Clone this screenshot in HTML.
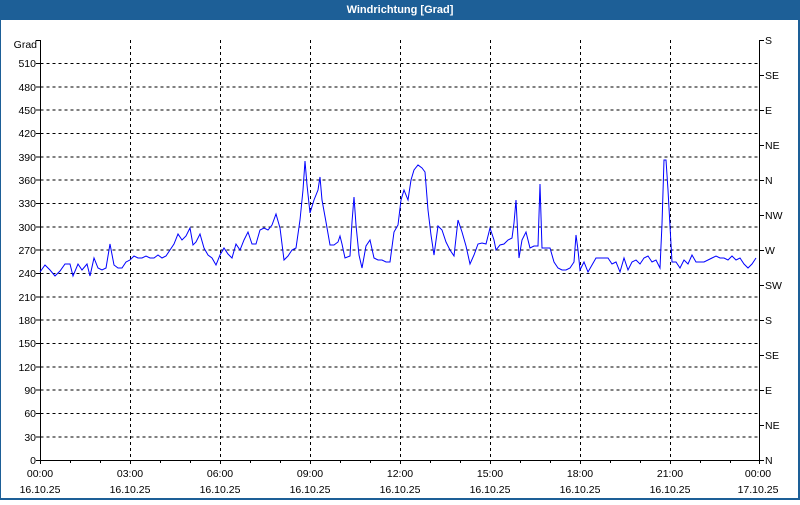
<!DOCTYPE html>
<html><head><meta charset="utf-8"><style>
html,body{margin:0;padding:0;background:#fff;}
body{width:800px;height:500px;overflow:hidden;font-family:"Liberation Sans",sans-serif;}
</style></head><body>
<svg width="800" height="500" xmlns="http://www.w3.org/2000/svg" font-family="Liberation Sans, sans-serif" font-size="10.5">
<rect x="0" y="0" width="800" height="500" fill="#1d5f97"/>
<rect x="1" y="20" width="797" height="478" fill="#fff"/>
<text x="400" y="13" fill="#fff" font-weight="bold" text-anchor="middle" font-size="11">Windrichtung [Grad]</text>
<g stroke="#000" stroke-dasharray="3,3" stroke-width="1">
<path d="M40.5 63.5H760M40.5 87H760M40.5 110H760M40.5 133.5H760M40.5 157H760M40.5 180H760M40.5 203.5H760M40.5 227H760M40.5 250H760M40.5 273.5H760M40.5 297H760M40.5 320H760M40.5 343.5H760M40.5 367H760M40.5 390H760M40.5 413.5H760M40.5 437H760"/>
<path d="M130.5 40V460M220.5 40V460M310.5 40V460M400.5 40V460M490.5 40V460M580.5 40V460M670.5 40V460"/>
</g>
<g stroke="#000" stroke-width="1" fill="none">
<path d="M40.5 40V460.5H759.5V40"/>
<path d="M40.5 460V464M70.5 460V463M100.5 460V463M130.5 460V464M160.5 460V463M190.5 460V463M220.5 460V464M250.5 460V463M280.5 460V463M310.5 460V464M340.5 460V463M370.5 460V463M400.5 460V464M430.5 460V463M460.5 460V463M490.5 460V464M520.5 460V463M550.5 460V463M580.5 460V464M610.5 460V463M640.5 460V463M670.5 460V464M700.5 460V463M730.5 460V463M759.5 460V464"/>
<path d="M36 40.5H40M36 63.5H40M36 87H40M36 110H40M36 133.5H40M36 157H40M36 180H40M36 203.5H40M36 227H40M36 250H40M36 273.5H40M36 297H40M36 320H40M36 343.5H40M36 367H40M36 390H40M36 413.5H40M36 437H40M36 460.5H40"/>
<path d="M759 40.5H764M759 75.5H764M759 110.5H764M759 145.5H764M759 180.5H764M759 215.5H764M759 250.5H764M759 285.5H764M759 320.5H764M759 355.5H764M759 390.5H764M759 425.5H764M759 460.5H764"/>
</g>
<g text-anchor="end" fill="#000">
<text x="37" y="48">Grad</text>
<text x="36" y="67">510</text><text x="36" y="91">480</text><text x="36" y="114">450</text><text x="36" y="137">420</text><text x="36" y="161">390</text><text x="36" y="184">360</text><text x="36" y="207">330</text><text x="36" y="231">300</text><text x="36" y="254">270</text><text x="36" y="277">240</text><text x="36" y="301">210</text><text x="36" y="324">180</text><text x="36" y="347">150</text><text x="36" y="371">120</text><text x="36" y="394">90</text><text x="36" y="417">60</text><text x="36" y="441">30</text><text x="36" y="464">0</text>
</g>
<g fill="#000">
<text x="765" y="44">S</text><text x="765" y="79">SE</text><text x="765" y="114">E</text><text x="765" y="149">NE</text><text x="765" y="184">N</text><text x="765" y="219">NW</text><text x="765" y="254">W</text><text x="765" y="289">SW</text><text x="765" y="324">S</text><text x="765" y="359">SE</text><text x="765" y="394">E</text><text x="765" y="429">NE</text><text x="765" y="464">N</text>
</g>
<g text-anchor="middle" fill="#000">
<text x="40" y="477">00:00</text><text x="130" y="477">03:00</text><text x="220" y="477">06:00</text><text x="310" y="477">09:00</text><text x="400" y="477">12:00</text><text x="490" y="477">15:00</text><text x="580" y="477">18:00</text><text x="670" y="477">21:00</text><text x="758" y="477">00:00</text>
<text x="40" y="493">16.10.25</text><text x="130" y="493">16.10.25</text><text x="220" y="493">16.10.25</text><text x="310" y="493">16.10.25</text><text x="400" y="493">16.10.25</text><text x="490" y="493">16.10.25</text><text x="580" y="493">16.10.25</text><text x="670" y="493">16.10.25</text><text x="758" y="493">17.10.25</text>
</g>
<polyline fill="none" stroke="#0000ff" stroke-width="1" points="40,272 45,265 50,270 55,276 60,271 65,264 70,264 73,276 78,264 82,270 87,264 90,276 94,258 98,268 102,270 106,268 110,244 114,265 118,268 122,268 126,262 130,260 134,256 138,258 142,258 146,256 150,258 154,258 158,255 162,258 166,256 170,250 174,244 178,234 182,240 186,236 190,228 193,245 196,242 200,234 204,248 208,255 212,258 216,265 220,255 224,248 228,254 232,258 236,244 240,250 244,240 248,232 252,244 256,244 260,230 264,228 268,230 272,225 276,214 280,228 284,260 288,256 292,250 296,248 300,220 303,190 305,161 307,185 310,213 314,200 318,190 320,177 322,200 326,222 330,245 334,245 338,242 340,236 342,244 345,258 350,256 352,222 354,197 356,225 359,255 362,268 366,246 370,240 374,258 378,260 382,260 386,262 390,262 394,232 398,225 401,200 404,190 408,200 411,180 414,170 418,165 422,168 425,172 428,210 431,235 434,255 438,226 442,230 446,242 450,250 454,256 458,220 462,232 466,246 470,264 474,255 478,244 482,243 486,244 490,228 494,240 496,250 500,245 504,244 508,240 512,238 514,223 516,200 519,258 522,240 526,232 530,248 534,246 538,246 540,184 542,248 546,248 550,248 554,262 558,268 562,270 566,270 570,268 574,262 576,235 578,250 580,270 584,262 588,272 592,265 596,258 600,258 604,258 608,258 612,264 616,262 620,272 624,258 628,270 632,262 636,260 640,264 644,258 648,256 652,262 656,260 660,268 662,224 664,160 666,160 668,190 672,262 676,262 680,268 684,260 688,264 692,255 696,262 700,262 704,262 708,260 712,258 716,256 720,258 724,258 728,260 732,256 736,260 740,258 744,264 748,268 752,264 756,258"/>
</svg>
</body></html>
